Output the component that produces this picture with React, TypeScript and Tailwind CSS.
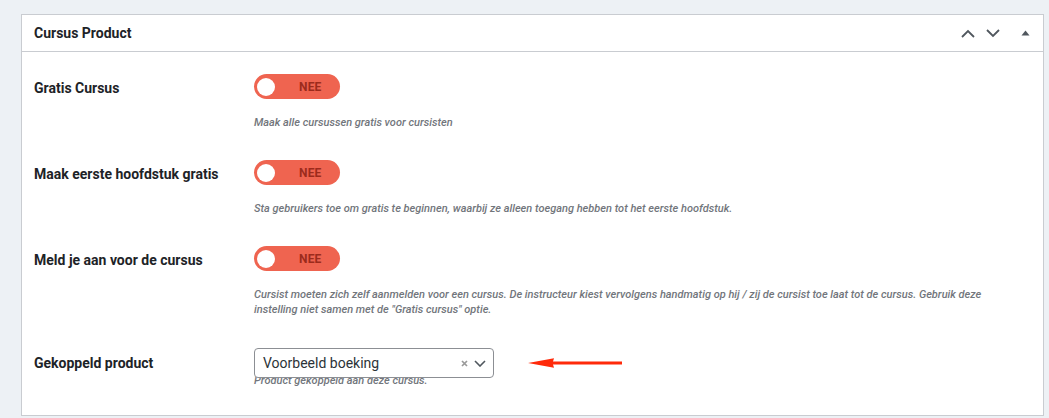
import React from "react"

const font = { fontFamily: "Roboto, 'Liberation Sans', sans-serif" }

function Toggle() {
  return (
    <div className="relative flex h-[25px] w-[86px] items-center rounded-full bg-[#ef6450]">
      <div className="absolute left-[3px] top-[3.5px] h-[18px] w-[18px] rounded-full bg-white" />
      <span className="ml-[45px] text-[12px] font-bold tracking-[0.2px] text-[#9c2b1c]">NEE</span>
    </div>
  )
}

function Help({ children }: { children: React.ReactNode }) {
  return <div className="text-[11px] font-medium italic leading-[15px] text-[#72767c]">{children}</div>
}

function ToggleRow({ label, help, first }: { label: string; help: React.ReactNode; first?: boolean }) {
  return (
    <div className={first ? "flex" : "mt-[30px] flex"}>
      <div className="w-[220px] pt-[7px] text-[14px] font-bold leading-[15px] text-[#1d2327]">{label}</div>
      <div className="flex flex-col">
        <Toggle />
        <div className="mt-[16px]">
          <Help>{help}</Help>
        </div>
      </div>
    </div>
  )
}

function Chevron({ up }: { up?: boolean }) {
  return (
    <svg width="14" height="9" viewBox="0 0 14 9" fill="none">
      <path d={up ? "M1 8 L7 2 L13 8" : "M1 1 L7 7 L13 1"} stroke="#50575e" strokeWidth="1.8" />
    </svg>
  )
}

export default function App() {
  return (
    <div className="min-h-[418px] bg-[#edf1f5] pl-[21px] pt-[14px]" style={font}>
      <div className="w-[1023px] border border-[#c9ccd1] bg-white">
        <div className="flex h-[37px] items-center justify-between border-b border-[#c9ccd1] pl-[12px] pr-[13px]">
          <div className="text-[14px] font-bold text-[#1d2327]">Cursus Product</div>
          <div className="flex items-center">
            <Chevron up />
            <div className="ml-[11px]">
              <Chevron />
            </div>
            <svg className="ml-[21px]" width="9" height="6" viewBox="0 0 9 6">
              <path d="M0.5 5.5 L4.5 0.5 L8.5 5.5 Z" fill="#50575e" />
            </svg>
          </div>
        </div>

        <div className="pb-[27px] pl-[12px] pt-[22px]">
          <ToggleRow first label="Gratis Cursus" help="Maak alle cursussen gratis voor cursisten" />
          <ToggleRow
            label="Maak eerste hoofdstuk gratis"
            help="Sta gebruikers toe om gratis te beginnen, waarbij ze alleen toegang hebben tot het eerste hoofdstuk."
          />
          <ToggleRow
            label="Meld je aan voor de cursus"
            help={
              <>
                Cursist moeten zich zelf aanmelden voor een cursus. De instructeur kiest vervolgens handmatig op hij / zij de cursist toe laat tot de cursus. Gebruik deze
                <br />
                instelling niet samen met de "Gratis cursus" optie.
              </>
            }
          />

          <div className="mt-[31px] flex">
            <div className="flex h-[30px] w-[220px] items-center pt-[1px] text-[14px] font-bold text-[#1d2327]">Gekoppeld product</div>
            <div className="flex flex-col">
              <div className="flex items-center">
                <div className="relative z-10 flex h-[30px] w-[240px] items-center justify-between rounded-[4px] border border-[#8c8f94] bg-white pl-[8px] pr-[7px]">
                  <span className="text-[14px] text-[#2c3338]">Voorbeeld boeking</span>
                  <div className="flex items-center">
                    <svg width="7" height="7" viewBox="0 0 7 7">
                      <path d="M1 1 L6 6 M6 1 L1 6" stroke="#9a9a9a" strokeWidth="1.7" />
                    </svg>
                    <svg className="ml-[6px]" width="12" height="7" viewBox="0 0 12 7" fill="none">
                      <path d="M1 1 L6 6 L11 1" stroke="#50575e" strokeWidth="1.6" />
                    </svg>
                  </div>
                </div>
                <svg className="ml-[34px]" width="95" height="12" viewBox="0 0 95 12">
                  <path d="M0 6 L26 1.2 L25 4.6 L94 4.6 L94 7.6 L25 7.6 L26 10.8 Z" fill="#ff2a0a" />
                </svg>
              </div>
              <div className="-mt-[5px]">
                <Help>Product gekoppeld aan deze cursus.</Help>
              </div>
            </div>
          </div>
        </div>
      </div>
    </div>
  )
}
